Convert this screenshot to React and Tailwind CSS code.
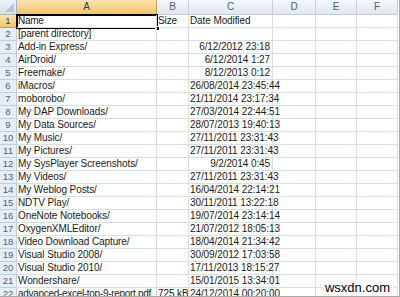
import React from "react";

const cols = [
  { k: "A", w: 140 },
  { k: "B", w: 32 },
  { k: "C", w: 84 },
  { k: "D", w: 43 },
  { k: "E", w: 41 },
  { k: "F", w: 41 },
];

const rows = [
  ["Name", "Size", "Date Modified", "l"],
  ["[parent directory]", "", "", "l"],
  ["Add-in Express/", "", "6/12/2012 23:18", "r"],
  ["AirDroid/", "", "6/12/2014 1:27", "r"],
  ["Freemake/", "", "8/12/2013 0:12", "r"],
  ["iMacros/", "", "26/08/2014 23:45:44", "l"],
  ["moborobo/", "", "21/11/2014 23:17:34", "l"],
  ["My DAP Downloads/", "", "27/03/2014 22:44:51", "l"],
  ["My Data Sources/", "", "28/07/2013 19:40:13", "l"],
  ["My Music/", "", "27/11/2011 23:31:43", "l"],
  ["My Pictures/", "", "27/11/2011 23:31:43", "l"],
  ["My SysPlayer Screenshots/", "", "9/2/2014 0:45", "r"],
  ["My Videos/", "", "27/11/2011 23:31:43", "l"],
  ["My Weblog Posts/", "", "16/04/2014 22:14:21", "l"],
  ["NDTV Play/", "", "30/11/2011 13:22:18", "l"],
  ["OneNote Notebooks/", "", "19/07/2014 23:14:14", "l"],
  ["OxygenXMLEditor/", "", "21/07/2012 18:05:13", "l"],
  ["Video Download Capture/", "", "18/04/2014 21:34:42", "l"],
  ["Visual Studio 2008/", "", "30/09/2012 17:03:58", "l"],
  ["Visual Studio 2010/", "", "17/11/2013 18:15:27", "l"],
  ["Wondershare/", "", "15/01/2015 13:34:01", "l"],
  ["advanced-excel-top-9-report.pdf", "725 kB", "24/12/2014 00:20:00", "l"],
];

const font = { fontFamily: "'Liberation Sans', Arial, sans-serif" };

export default function App() {
  return (
    <div
      className="relative w-[400px] h-[297px] overflow-hidden bg-white text-[#1a1a1a] border-r border-b border-[#a8a8a8]"
      style={font}
    >
      {/* header row */}
      <div className="flex h-[15px]">
        <div className="relative w-[17px] shrink-0 border-r border-b border-[#9eb6ce] bg-gradient-to-b from-[#eef2f7] to-[#d8e0ea]">
          <div className="absolute right-[2px] bottom-[2px] w-0 h-0 border-l-[9px] border-l-transparent border-b-[9px] border-b-[#b7c4d5]" />
        </div>
        {cols.map((c) => (
          <div
            key={c.k}
            style={{ width: c.w }}
            className={
              "shrink-0 flex items-center justify-center text-[10px] leading-none border-r border-b " +
              (c.k === "A"
                ? "bg-gradient-to-b from-[#fbe3b0] to-[#f2c46c] border-[#c5a05a] text-[#2e3f55]"
                : "bg-gradient-to-b from-[#f4f7fb] to-[#e0e7f0] border-[#c1cfdd] text-[#4d6078]")
            }
          >
            {c.k}
          </div>
        ))}
      </div>

      {rows.map((r, i) => (
        <div key={i} className="flex h-[13px]">
          <div
            className={
              "w-[17px] shrink-0 flex items-center justify-center text-[9.5px] leading-none border-r border-b " +
              (i === 0
                ? "bg-gradient-to-b from-[#fbe3b0] to-[#f2c46c] border-[#c5a05a] text-[#2e3f55]"
                : "bg-[#e6edf6] border-[#c1cfdd] text-[#4d6078]")
            }
          >
            {i + 1}
          </div>
          <div
            className={
              "relative w-[140px] shrink-0 border-r border-b border-[#d9dfe8] text-[10px] leading-[12px] pl-[1px] whitespace-nowrap z-10 " +
              (r[1] ? "overflow-hidden tracking-[-0.3px]" : "overflow-visible tracking-[-0.1px]")
            }
          >
            {r[0]}
          </div>
          <div className="relative w-[32px] shrink-0 border-r border-b border-[#d9dfe8] text-[10px] tracking-[-0.1px] leading-[12px] pl-[1px] whitespace-nowrap overflow-hidden">
            {r[1]}
          </div>
          <div
            className={
              "w-[84px] shrink-0 border-r border-b border-[#d9dfe8] text-[10px] tracking-[-0.1px] leading-[12px] whitespace-nowrap overflow-visible " +
              (r[3] === "r" ? "text-right pr-[2px]" : "pl-[1px]")
            }
          >
            {r[2]}
          </div>
          <div className="w-[43px] shrink-0 border-r border-b border-[#d9dfe8]" />
          <div className="w-[41px] shrink-0 border-r border-b border-[#d9dfe8]" />
          <div className="w-[41px] shrink-0 border-r border-b border-[#d9dfe8]" />
        </div>
      ))}

      {/* selection A1 */}
      <div className="absolute left-[16px] top-[14px] w-[142px] h-[15px] border-2 border-black pointer-events-none">
        <div className="absolute right-[-4px] bottom-[-4px] w-[5px] h-[5px] bg-black border border-white" />
      </div>

      {/* watermark */}
      <div className="absolute right-[6px] bottom-[1px] bg-white px-[3px] text-[13px] leading-[15px] text-black">
        wsxdn.com
      </div>
    </div>
  );
}
